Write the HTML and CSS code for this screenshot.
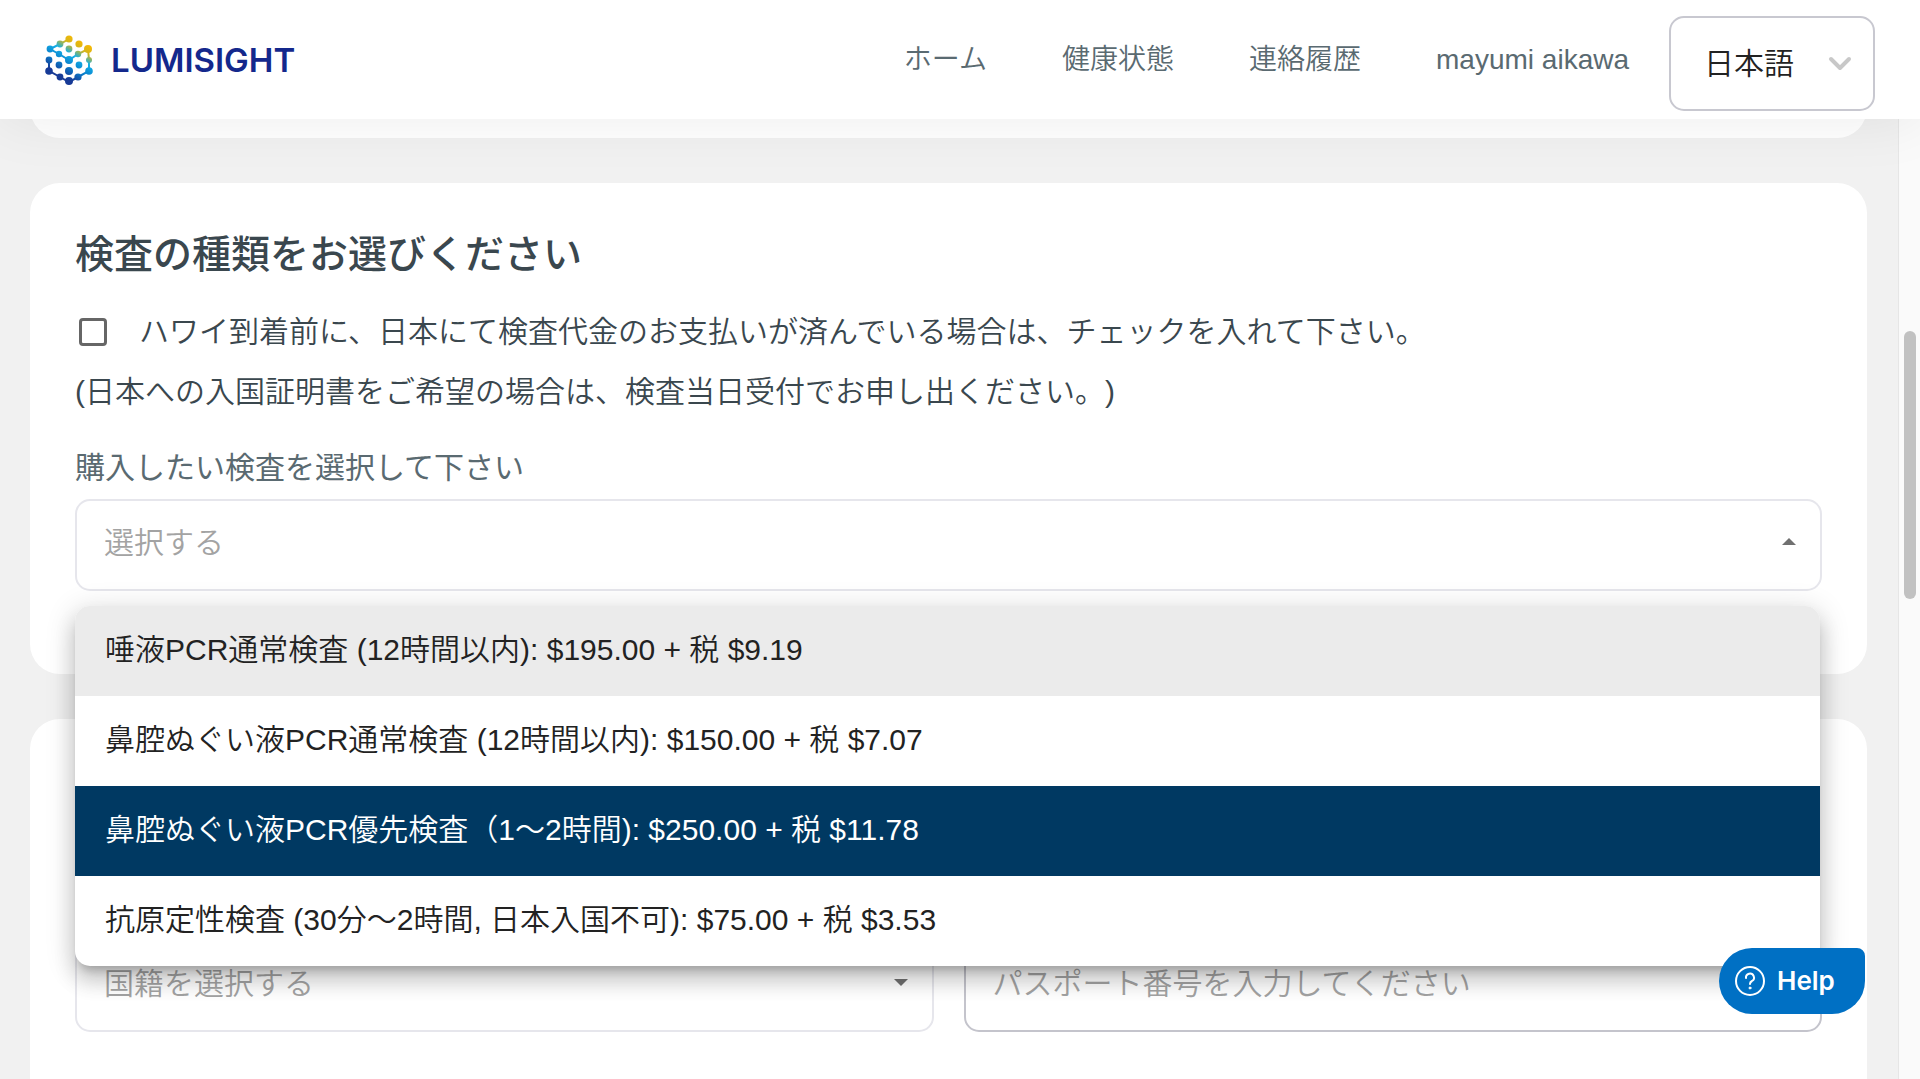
FILE: index.html
```html
<!DOCTYPE html>
<html lang="ja">
<head>
<meta charset="utf-8">
<meta name="viewport" content="width=device-width, initial-scale=1">
<title>LUMISIGHT</title>
<link rel="stylesheet" href="styles.css">
</head>
<body>
<header class="site-header">
  <a class="brand" href="#">
    <svg class="brand-mark" viewBox="0 0 48 52" aria-hidden="true">
      <defs>
        <linearGradient id="mark" gradientUnits="userSpaceOnUse" x1="38" y1="6" x2="14" y2="48">
          <stop offset="0" stop-color="#fdb900"/>
          <stop offset="0.2" stop-color="#d3b51c"/>
          <stop offset="0.38" stop-color="#13b0e8"/>
          <stop offset="0.6" stop-color="#0a80cc"/>
          <stop offset="0.85" stop-color="#173a96"/>
        </linearGradient>
      </defs>
      <g fill="url(#mark)" stroke="url(#mark)">
        <path fill="none" stroke-width="2" d="M24 5 15 10 5 15 14 20 24 26 33 20 43 15 44 26 44 37 33 43 24 48 15 43 4 37 4 26"/>
        <g stroke="none">
          <circle cx="24" cy="5" r="3.6"/><circle cx="34" cy="10" r="3.6"/><circle cx="15" cy="10" r="3.4"/>
          <circle cx="43" cy="15" r="4"/><circle cx="24" cy="15" r="3.4"/><circle cx="5" cy="15" r="3.4"/>
          <circle cx="14" cy="20" r="3.2"/><circle cx="33" cy="20" r="3.2"/><circle cx="24" cy="26" r="4"/>
          <circle cx="4" cy="26" r="3.4"/><circle cx="44" cy="26" r="3"/><circle cx="14" cy="31" r="3.4"/>
          <circle cx="34" cy="31" r="3.4"/><circle cx="24" cy="37" r="4"/><circle cx="4" cy="37" r="3.8"/>
          <circle cx="44" cy="37" r="3.8"/><circle cx="15" cy="43" r="3.4"/><circle cx="33" cy="43" r="3.6"/>
          <circle cx="24" cy="47" r="4"/>
        </g>
      </g>
    </svg>
    <span>LUMISIGHT</span>
  </a>
  <nav class="site-nav">
    <a href="#">ホーム</a>
    <a href="#">健康状態</a>
    <a href="#">連絡履歴</a>
    <a href="#">mayumi aikawa</a>
  </nav>
  <div class="language">
    <select aria-label="言語">
      <option>日本語</option>
    </select>
    <svg class="chevron" viewBox="0 0 24 16" aria-hidden="true"><path d="M3 3l9 9 9-9"/></svg>
  </div>
</header>

<div class="viewport">
  <main class="content">
    <section class="card card-previous"></section>

    <section class="card card-test">
      <h2>検査の種類をお選びください</h2>
      <label class="check">
        <input type="checkbox">
        <span>ハワイ到着前に、日本にて検査代金のお支払いが済んでいる場合は、チェックを入れて下さい。</span>
      </label>
      <p class="note">(日本への入国証明書をご希望の場合は、検査当日受付でお申し出ください。)</p>
      <label class="field-label" for="test">購入したい検査を選択して下さい</label>
      <div class="field">
        <input id="test" type="text" role="combobox" aria-expanded="true" aria-controls="tests" placeholder="選択する">
        <svg class="caret" viewBox="0 0 14 7" aria-hidden="true"><path d="M0 7l7-7 7 7z"/></svg>
        <ul class="options" id="tests" role="listbox">
          <li class="is-focused" role="option">唾液PCR通常検査 (12時間以内): $195.00 + 税 $9.19</li>
          <li role="option">鼻腔ぬぐい液PCR通常検査 (12時間以内): $150.00 + 税 $7.07</li>
          <li class="is-selected" role="option" aria-selected="true">鼻腔ぬぐい液PCR優先検査（1〜2時間): $250.00 + 税 $11.78</li>
          <li role="option">抗原定性検査 (30分〜2時間, 日本入国不可): $75.00 + 税 $3.53</li>
        </ul>
      </div>
    </section>

    <section class="card card-passport">
      <div class="field">
        <input type="text" aria-label="国籍" placeholder="国籍を選択する">
        <svg class="caret" viewBox="0 0 14 7" aria-hidden="true"><path d="M0 0l7 7 7-7z"/></svg>
      </div>
      <div class="field field-strong">
        <input type="text" aria-label="パスポート番号" placeholder="パスポート番号を入力してください">
      </div>
    </section>
  </main>
  <div class="scrollbar" aria-hidden="true"><div class="thumb"></div></div>
</div>

<button class="help" type="button">
  <svg viewBox="0 0 30 30" aria-hidden="true">
    <circle cx="15" cy="15" r="14"/>
    <path d="M11 12a4 4 0 1 1 6 3q-2 1-2 3"/>
    <circle class="dot" cx="15" cy="22" r="1"/>
  </svg>
  <span>Help</span>
</button>
</body>
</html>
```

FILE: styles.css
```css
* { box-sizing: border-box; }

body {
  margin: 0;
  height: 100vh;
  display: flex;
  flex-direction: column;
  overflow: hidden;
  background: #f1f1f1;
  color: #3a474e;
  font-family: "Liberation Sans", "Noto Sans CJK JP", sans-serif;
  font-size: 30px;
  line-height: 40px;
  text-spacing-trim: space-all;
}

input, select, button { font: inherit; color: inherit; }

.site-header {
  position: relative;
  z-index: 5;
  flex: none;
  height: 119px;
  padding: 0 45px;
  display: flex;
  align-items: center;
  background: #fff;
  box-shadow: 0 0 60px rgba(0, 0, 0, 0.08);
}

.brand {
  display: flex;
  align-items: center;
  gap: 18px;
  margin-right: auto;
  color: #14288c;
  font-family: Inter, sans-serif;
  font-size: 33px;
  font-weight: 600;
  text-decoration: none;
}
.brand-mark { width: 48px; height: 52px; }

.site-nav {
  display: flex;
  gap: 75px;
  margin-right: 40px;
}
.site-nav a {
  color: #5a6a71;
  font-size: 28px;
  font-weight: 350;
  text-decoration: none;
}

.language { position: relative; margin-top: 8px; }
.language select {
  width: 206px;
  height: 95px;
  padding: 0 33px;
  border: 2px solid #c8c8d0;
  border-radius: 15px;
  background: #fff;
  color: #222;
  font-weight: 350;
  appearance: none;
}
.chevron {
  position: absolute;
  right: 23px;
  top: 40px;
  width: 24px;
  height: 16px;
  fill: none;
  stroke: #c8c8c8;
  stroke-width: 4;
  stroke-linecap: round;
  stroke-linejoin: round;
  pointer-events: none;
}

.viewport { flex: 1; min-height: 0; display: flex; overflow: hidden; }
.content {
  flex: 1;
  padding: 0 31px 0 30px;
  display: flex;
  flex-direction: column;
  gap: 45px;
}
.card {
  flex: none;
  padding: 47px 45px 45px;
  border-radius: 30px;
  background: #fff;
}
.card-previous { height: 60px; margin-top: -41px; padding: 0; }
.card-test { padding-bottom: 83px; }

h2 {
  margin: 0;
  font-size: 39px;
  font-weight: 500;
  line-height: 50px;
}
.check {
  display: flex;
  align-items: center;
  gap: 32px;
  margin-top: 32px;
  padding-left: 4px;
  font-weight: 350;
}
.check input {
  flex: none;
  width: 28px;
  height: 28px;
  margin: 0;
  border: 3px solid #666;
  border-radius: 4px;
  appearance: none;
}
.note { margin: 20px 0 36px; font-weight: 350; }
.field-label { display: block; color: #5a6a71; font-weight: 400; }

.field { position: relative; flex: 1; min-width: 0; }
.field input {
  display: block;
  width: 100%;
  height: 92px;
  padding: 0 27px 4px;
  border: 2px solid #e6e6ec;
  border-radius: 15px;
  background: #fff;
  font-weight: 350;
  outline: none;
}
.field input::placeholder { color: #a3a3a3; opacity: 1; }
.field-label + .field { margin-top: 11px; }
.field-strong input { border-color: #c4c4cc; }
.caret {
  position: absolute;
  right: 26px;
  top: 39px;
  width: 14px;
  height: 7px;
  fill: #707070;
}

.options {
  position: absolute;
  z-index: 3;
  top: 107px;
  left: 0;
  right: 2px;
  margin: 0;
  padding: 0;
  overflow: hidden;
  border-radius: 15px;
  background: #fff;
  box-shadow: 0 9px 9px -5px rgba(0, 0, 0, 0.2), 0 15px 20px 2px rgba(0, 0, 0, 0.14), 0 5px 28px 4px rgba(0, 0, 0, 0.12);
  color: #222;
  font-weight: 350;
  list-style: none;
}
.options li { height: 90px; padding: 24px 30px; white-space: nowrap; }
.options .is-focused { background: #ebebeb; }
.options .is-selected { background: #003962; color: #fff; }

.card-passport { display: flex; gap: 30px; padding-top: 221px; padding-bottom: 90px; }

.scrollbar {
  flex: none;
  width: 22px;
  padding: 212px 4px 0 5px;
  border-left: 1px solid #e6e6e6;
  background: #fafafa;
}
.thumb { height: 268px; border-radius: 6px; background: #c1c1c1; }

.help {
  position: fixed;
  z-index: 6;
  right: 55px;
  bottom: 65px;
  width: 146px;
  height: 66px;
  padding: 0 16px;
  display: flex;
  align-items: center;
  gap: 12px;
  border: 0;
  border-radius: 33px 8px 33px 33px;
  background: #0070c4;
  color: #fff;
  font-family: Inter, sans-serif;
  font-size: 26px;
  font-weight: 600;
}
.help svg { width: 30px; height: 30px; fill: none; stroke: #fff; stroke-width: 2; stroke-linecap: round; }
.help .dot { fill: #fff; stroke-width: 1; }
```
